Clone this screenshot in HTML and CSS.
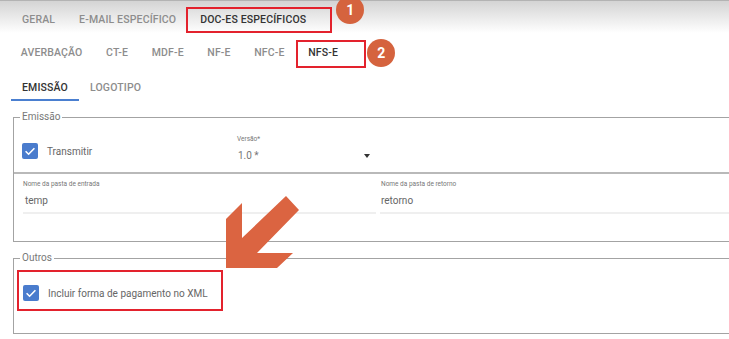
FILE: index.html
```html
<!DOCTYPE html>
<html lang="pt-BR">
<head>
    <meta charset="UTF-8">
    <meta name="viewport" content="width=device-width, initial-scale=1.0">
    <title>Configurações - DOC-es específicos</title>
    <link rel="stylesheet" href="styles.css">
</head>
<body>
<div class="topbar">
    <nav class="tabs tabs-main">
        <span class="tab">Geral</span>
        <span class="tab">E-mail específico</span>
        <span class="tab active">Doc-es específicos
            <span class="mark mark-main"></span>
            <span class="badge badge-main">1</span>
        </span>
    </nav>
</div>
<nav class="tabs tabs-docs">
    <span class="tab">Averbação</span>
    <span class="tab">CT-e</span>
    <span class="tab">MDF-e</span>
    <span class="tab">NF-e</span>
    <span class="tab">NFC-e</span>
    <span class="tab active">NFS-e
        <span class="mark mark-docs"></span>
        <span class="badge badge-docs">2</span>
    </span>
</nav>
<nav class="tabs tabs-sub">
    <span class="tab active">Emissão</span>
    <span class="tab">Logotipo</span>
</nav>

<fieldset class="group">
    <legend>Emissão</legend>
    <div class="row-top">
        <div class="check-col">
            <label class="check">
                <span class="box">
                    <svg viewBox="0 0 16 16" width="16" height="16"><path d="M3.6 8.2 L6.6 11.2 L12.4 5.2" fill="none" stroke="#fff" stroke-width="1.6"/></svg>
                </span>
                Transmitir
            </label>
        </div>
        <div class="select">
            <div class="small-label">Versão*</div>
            <div class="select-value">1.0 * <span class="caret"></span></div>
        </div>
    </div>
    <div class="row-inputs">
        <div class="field field-left">
            <div class="small-label">Nome da pasta de entrada</div>
            <div class="field-value">temp</div>
        </div>
        <div class="field field-right">
            <div class="small-label">Nome da pasta de retorno</div>
            <div class="field-value">retorno</div>
        </div>
    </div>
</fieldset>

<fieldset class="group group-outros">
    <legend>Outros</legend>
    <div class="annot">
        <label class="check">
            <span class="box">
                <svg viewBox="0 0 16 16" width="16" height="16"><path d="M3.6 8.2 L6.6 11.2 L12.4 5.2" fill="none" stroke="#fff" stroke-width="1.6"/></svg>
            </span>
            Incluir forma de pagamento no XML
        </label>
    </div>
</fieldset>

<!-- seta de destaque -->
<svg class="arrow" viewBox="0 0 85 85" width="85" height="85">
    <polygon points="6,78 6,29 22,13 22,48 66,6 79,20 37,63 73,63 57,78" fill="#db6441"/>
</svg>
</body>
</html>
```

FILE: styles.css
```css
body {
    margin: 0;
    font-family: Roboto, "Liberation Sans", sans-serif;
    background: #fff;
    overflow: hidden;
    position: relative;
    height: 339px;
}
.topbar {
    border-top: 1px solid #b3b3b3;
    padding-top: 6px;
    height: 26px;
    background: linear-gradient(#d4d4d4, #ffffff);
}
.tabs {
    display: flex;
    padding-left: 10px;
}
.tab {
    position: relative;
    padding: 0 12px;
    font-size: 10.5px;
    font-weight: 500;
    letter-spacing: 0.15px;
    text-transform: uppercase;
    color: #8d8d8d;
    white-space: nowrap;
}
.tab.active {
    color: #333;
}
.tabs-main .tab {
    line-height: 26px;
}
.tabs-docs {
    margin-top: 5px;
    padding-left: 9px;
}
.tabs-docs .tab {
    padding: 0 11.8px;
    line-height: 30px;
}
.tabs-sub {
    margin-top: 8px;
    padding-left: 11px;
}
.tabs-sub .tab {
    padding: 0 11px;
    line-height: 23px;
    border-bottom: 2px solid transparent;
}
.tabs-sub .tab.active {
    border-bottom-color: #4a7fd0;
}
.mark {
    position: absolute;
    border: 2px solid #e3222d;
    box-sizing: border-box;
}
.mark-main {
    left: -2px;
    top: 0;
    width: 146px;
    height: 26px;
}
.mark-docs {
    left: 0;
    top: 2px;
    width: 70px;
    height: 28px;
}
.badge {
    position: absolute;
    width: 28px;
    height: 28px;
    border-radius: 50%;
    background: #d5633e;
    color: #fff;
    font-size: 14px;
    font-weight: 700;
    line-height: 28px;
    text-align: center;
}
.badge-main {
    left: 148px;
    top: -11px;
}
.badge-docs {
    left: 71px;
    top: 1px;
}
.group {
    margin: 10px -20px 0 13px;
    padding: 0;
    min-width: 0;
    border: 1px solid #a3a3a3;
}
.group legend {
    margin-left: 6px;
    padding: 0 2px;
    font-size: 10px;
    line-height: 12px;
    color: #777;
}
.row-top {
    display: flex;
    height: 51px;
    box-sizing: border-box;
    padding-top: 12px;
    border-bottom: 2px solid #b9b9b9;
}
.check-col {
    width: 215px;
    padding-left: 8px;
    padding-top: 8px;
}
.check {
    display: flex;
    align-items: center;
    gap: 9px;
    font-size: 10px;
    color: #666;
}
.box {
    width: 16px;
    height: 16px;
    border-radius: 2px;
    background: #4a7ccd;
    display: block;
}
.box svg {
    display: block;
}
.select {
    width: 133px;
}
.small-label {
    font-size: 6.5px;
    line-height: 8px;
    color: #777;
}
.select-value {
    margin-top: 4px;
    line-height: 18px;
    font-size: 10px;
    color: #777;
    padding-left: 1px;
    display: flex;
    justify-content: space-between;
    align-items: center;
}
.caret {
    width: 0;
    height: 0;
    border-left: 3.5px solid transparent;
    border-right: 3.5px solid transparent;
    border-top: 4px solid #333;
}
.row-inputs {
    display: flex;
    gap: 4px;
    height: 67px;
    box-sizing: border-box;
    padding: 7px 0 0 9px;
}
.field {
    border-bottom: 2px solid #efefef;
    height: 31px;
}
.field-left {
    width: 353px;
}
.field-right {
    flex: 1;
    padding-left: 1px;
}
.field .small-label {
    line-height: 7px;
}
.field-value {
    margin-top: 4px;
    line-height: 18px;
    font-size: 10px;
    color: #666;
    padding-left: 2px;
}
.field-right .field-value {
    padding-left: 0;
}
.group-outros {
    margin-top: 10px;
    padding-bottom: 22px;
}
.annot {
    margin: 6px 0 0 3px;
    width: 206px;
    height: 41px;
    box-sizing: border-box;
    border: 2px solid #e3222d;
    padding: 13px 0 0 4px;
}
.arrow {
    position: absolute;
    left: 220px;
    top: 190px;
}
```
